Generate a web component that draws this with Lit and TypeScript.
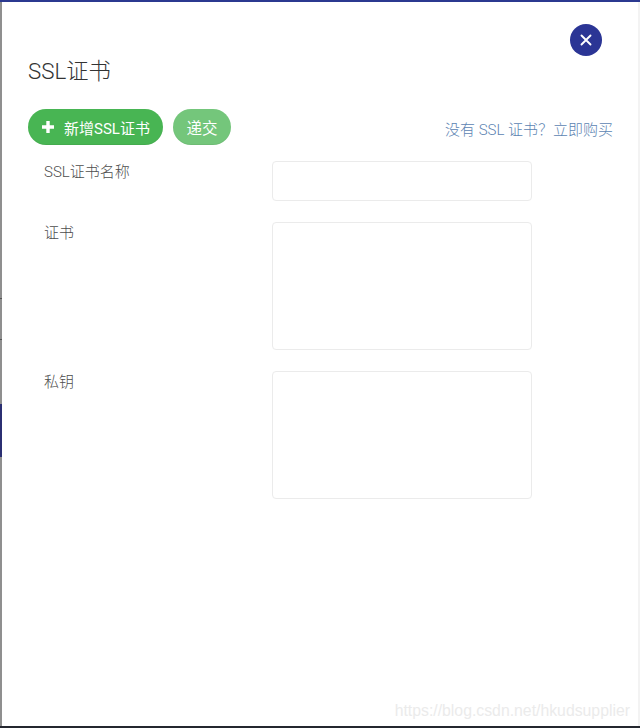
import { LitElement, html, css } from "lit";
import { customElement } from "lit/decorators.js";

@customElement("app-root")
export class AppRoot extends LitElement {
  static styles = css`
    :host {
      display: block;
      width: 640px;
      height: 728px;
      overflow: hidden;
      background: #fff;
      font-family: Roboto, "Noto Sans CJK SC", sans-serif;
      color: #555;
    }
    .frame {
      height: 728px;
      box-sizing: border-box;
      display: flex;
      flex-direction: column;
      border-top: 2px solid #2b3990;
      border-bottom: 2px solid #24272f;
      position: relative;
    }
    .main {
      flex: 1;
      min-height: 0;
      display: flex;
    }
    .edge {
      width: 2px;
      flex: none;
      display: flex;
      flex-direction: column;
      background: #8f8f8f;
    }
    .edge .a { height: 296px; }
    .edge .tick { height: 1px; background: #555; }
    .edge .b { height: 40px; }
    .edge .c { height: 64px; }
    .edge .navy { height: 53px; background: #2b2f72; }
    .content {
      flex: 1;
      min-width: 0;
      padding: 22px 24px 0 26px;
      display: flex;
      flex-direction: column;
    }
    .right-edge {
      width: 2px;
      flex: none;
      background: #f3f3f3;
    }
    .close-row {
      display: flex;
      justify-content: flex-end;
      padding-right: 12px;
    }
    .close {
      width: 32px;
      height: 32px;
      border-radius: 50%;
      border: 0;
      padding: 0;
      background: #2b3595;
      display: flex;
      align-items: center;
      justify-content: center;
    }
    h1 {
      margin: 0;
      font-size: 22.3px;
      line-height: 30px;
      font-weight: 300;
      color: #333;
    }
    .toolbar {
      margin-top: 23px;
      display: flex;
      align-items: center;
      gap: 10px;
    }
    .btn {
      height: 36px;
      border: 0;
      border-radius: 18px;
      background: #48b553;
      color: #fff;
      font: inherit;
      font-size: 15px;
      display: flex;
      align-items: center;
      gap: 10px;
      padding: 0 13px 0 14px;
      box-shadow: inset 0 -1px 0 rgba(0, 0, 0, 0.05);
    }
    .btn.submit {
      background: #74c67b;
      font-size: 15.5px;
      padding: 0 13.5px;
    }
    .link {
      margin-left: auto;
      padding: 2px 1px 0 0;
      color: #5c84b2;
      font-size: 15px;
      font-weight: 300;
      white-space: pre;
    }
    .form {
      margin-top: 16px;
      display: flex;
      flex-direction: column;
      gap: 21px;
    }
    .row {
      display: flex;
    }
    label {
      width: 244px;
      flex: none;
      padding: 1px 0 0 16px;
      box-sizing: border-box;
      font-size: 15px;
      line-height: 20px;
      font-weight: 300;
      color: #4d4d4d;
    }
    .field {
      width: 260px;
      box-sizing: border-box;
      border: 1px solid #ebebeb;
      border-radius: 4px;
      background: #fff;
      display: block;
      margin: 0;
      padding: 0;
      resize: none;
      outline: none;
    }
    input.field { height: 40px; }
    textarea.field { height: 128px; }
    .watermark {
      position: absolute;
      right: 10px;
      bottom: 6px;
      font-family: "Liberation Sans", sans-serif;
      font-size: 15.8px;
      color: #ebebeb;
      line-height: 18px;
    }
  `;

  render() {
    return html`
      <div class="frame">
        <div class="main">
          <div class="edge">
            <div class="a"></div>
            <div class="tick"></div>
            <div class="b"></div>
            <div class="tick"></div>
            <div class="c"></div>
            <div class="navy"></div>
          </div>
          <div class="content">
            <div class="close-row">
              <button class="close" aria-label="关闭">
                <svg width="12" height="12" viewBox="0 0 12 12">
                  <path d="M1.5 1.5 10.5 10.5M10.5 1.5 1.5 10.5" stroke="#fff" stroke-width="1.9" stroke-linecap="round" fill="none"></path>
                </svg>
              </button>
            </div>
            <h1>SSL证书</h1>
            <div class="toolbar">
              <button class="btn">
                <svg width="12" height="12" viewBox="0 0 12 12">
                  <path d="M6 0v12M0 6h12" stroke="#fff" stroke-width="3.4" fill="none"></path>
                </svg>
                <span>新增SSL证书</span>
              </button>
              <button class="btn submit">递交</button>
              <span class="link">没有 SSL 证书？立即购买</span>
            </div>
            <div class="form">
              <div class="row"><label>SSL证书名称</label><input class="field" /></div>
              <div class="row"><label>证书</label><textarea class="field"></textarea></div>
              <div class="row"><label>私钥</label><textarea class="field"></textarea></div>
            </div>
          </div>
          <div class="right-edge"></div>
        </div>
        <div class="watermark">https://blog.csdn.net/hkudsupplier</div>
      </div>
    `;
  }
}
